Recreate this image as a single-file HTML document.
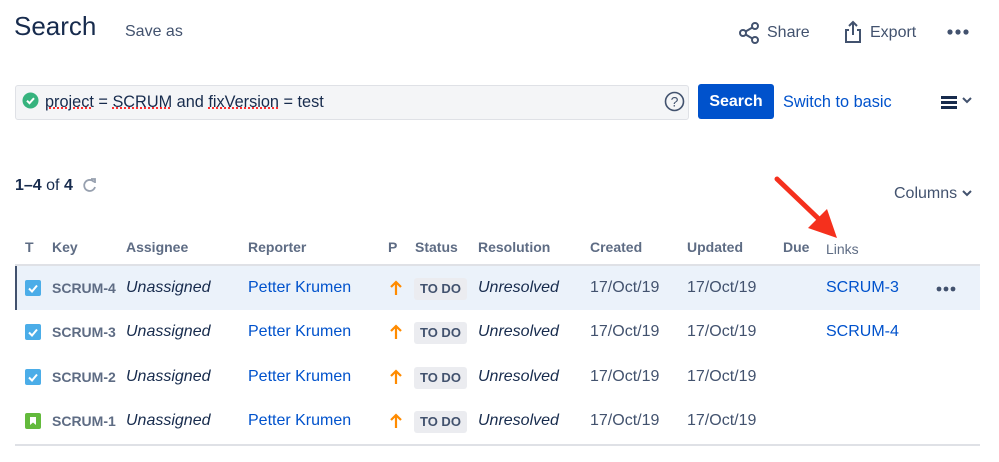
<!DOCTYPE html>
<html><head><meta charset="utf-8"><style>
*{margin:0;padding:0;box-sizing:border-box}
body{width:999px;height:462px;background:#fff;font-family:"Liberation Sans",Arial,sans-serif;color:#172b4d;position:relative;overflow:hidden}
.a{position:absolute;white-space:nowrap}
.h{font-size:14px;font-weight:bold;color:#5e6c84;top:239px}
.r{font-size:16px;line-height:20px}
.key{font-size:14px;font-weight:bold;color:#5e6c84}
.it{font-style:italic;color:#172b4d}
.lnk{color:#0052cc}
.td{background:#ebecf0;color:#42526e;font-size:13px;font-weight:bold;padding:3px 6px;border-radius:3px;line-height:16px}
</style></head><body>
<div class="a" style="left:14px;top:11px;font-size:26px;color:#172b4d">Search</div>
<div class="a" style="left:125px;top:23px;font-size:16px;color:#42526e">Save as</div>

<svg class="a" style="left:738px;top:22px" width="22" height="22" viewBox="0 0 22 22"><g fill="none" stroke="#42526e" stroke-width="2"><circle cx="5" cy="11" r="3"/><circle cx="17" cy="4" r="3"/><circle cx="17" cy="18" r="3"/><path d="M7.6 9.5L14.4 5.5M7.6 12.5L14.4 16.5"/></g></svg>
<div class="a" style="left:767px;top:24px;font-size:16px;color:#42526e">Share</div>
<svg class="a" style="left:843px;top:20px" width="20" height="24" viewBox="0 0 20 24"><g fill="none" stroke="#42526e" stroke-width="2"><path d="M6 10H3v12h14V10h-3M10 15V2M6 6l4-4 4 4"/></g></svg>
<div class="a" style="left:870px;top:24px;font-size:16px;color:#42526e">Export</div>
<svg class="a" style="left:946px;top:28px" width="24" height="8"><circle cx="4" cy="4" r="2.6" fill="#42526e"/><circle cx="12" cy="4" r="2.6" fill="#42526e"/><circle cx="20" cy="4" r="2.6" fill="#42526e"/></svg>

<div class="a" style="left:15px;top:85px;width:674px;height:35px;background:#f4f5f7;border:1px solid #dfe1e6;border-radius:3px"></div>
<svg class="a" style="left:22px;top:92px" width="17" height="17" viewBox="0 0 17 17"><circle cx="8.5" cy="8.5" r="8" fill="#36b37e"/><path d="M5 8.7l2.5 2.5 4.5-5" fill="none" stroke="#fff" stroke-width="2"/></svg>
<div class="a" style="left:45px;top:93px;font-size:16.3px;color:#172b4d"><span style="text-decoration:underline dotted red">project</span> = <span style="text-decoration:underline dotted red">SCRUM</span> and <span style="text-decoration:underline dotted red">fixVersion</span> = test</div>
<svg class="a" style="left:664px;top:91px" width="21" height="21" viewBox="0 0 21 21"><circle cx="10.5" cy="10.5" r="9" fill="none" stroke="#42526e" stroke-width="1.6"/><text x="10.5" y="15.5" text-anchor="middle" font-size="14" fill="#42526e" font-family="Liberation Sans">?</text></svg>
<div class="a" style="left:698px;top:84px;width:76px;height:35px;background:#0052cc;border-radius:3px;color:#fff;font-weight:bold;font-size:16px;text-align:center;line-height:35px">Search</div>
<div class="a" style="left:783px;top:93px;font-size:16.3px;color:#0052cc">Switch to basic</div>
<div class="a" style="left:941px;top:96px;width:16px;height:3px;background:#172b4d;box-shadow:0 5px 0 #172b4d,0 10px 0 #172b4d"></div>
<svg class="a" style="left:962px;top:97px" width="10" height="7" viewBox="0 0 10 7"><path d="M1 1l4 4 4-4" fill="none" stroke="#42526e" stroke-width="2"/></svg>

<div class="a" style="left:15px;top:177px;font-size:16px;color:#172b4d"><b>1–4</b> of <b>4</b></div>
<svg class="a" style="left:82px;top:178px" width="15" height="15" viewBox="0 0 15 15"><path d="M12 4A5.5 5.5 0 1 0 13 9" fill="none" stroke="#97a0af" stroke-width="1.8"/><path d="M9 1h4v4" fill="none" stroke="#97a0af" stroke-width="1.8"/></svg>
<div class="a" style="left:894px;top:185px;font-size:16px;color:#42526e">Columns</div>
<svg class="a" style="left:962px;top:190px" width="10" height="7" viewBox="0 0 10 7"><path d="M1 1l4 4 4-4" fill="none" stroke="#42526e" stroke-width="2"/></svg>

<svg class="a" style="left:770px;top:172px" width="70" height="70" viewBox="0 0 70 70"><path d="M7 7L52 50" stroke="#f5301d" stroke-width="5" stroke-linecap="round"/><path d="M67 66L38 56 57 37z" fill="#f5301d"/></svg>

<div class="a h" style="left:25px">T</div>
<div class="a h" style="left:52px">Key</div>
<div class="a h" style="left:126px">Assignee</div>
<div class="a h" style="left:248px">Reporter</div>
<div class="a h" style="left:388px">P</div>
<div class="a h" style="left:415px">Status</div>
<div class="a h" style="left:478px">Resolution</div>
<div class="a h" style="left:590px">Created</div>
<div class="a h" style="left:687px">Updated</div>
<div class="a h" style="left:783px">Due</div>
<div class="a" style="left:826px;top:241px;font-size:14px;color:#5e6c84">Links</div>

<div class="a" style="left:15px;top:264px;width:965px;height:2px;background:#dfe1e6"></div>
<div class="a" style="left:15px;top:266px;width:965px;height:44px;background:#ebf2fa;border-left:2px solid #42526e"></div>
<div class="a" style="left:15px;top:444px;width:965px;height:2px;background:#dfe1e6"></div>

<div class="a" style="left:0;top:278px;width:999px;height:20px">
 <svg class="a" style="left:25px;top:2px" width="16" height="16"><rect width="16" height="16" rx="2" fill="#4bade8"/><path d="M4 8.5l3 3 5-6" fill="none" stroke="#fff" stroke-width="2"/></svg>
 <div class="a key" style="left:52px;top:2px">SCRUM-4</div>
 <div class="a r it" style="left:126px">Unassigned</div>
 <div class="a r lnk" style="left:248px">Petter Krumen</div>
 <svg class="a" style="left:389px;top:2px" width="14" height="16"><path d="M7 15V2M2 7l5-5 5 5" fill="none" stroke="#ff8b00" stroke-width="2.2"/></svg>
 <div class="a td" style="left:414px;top:0">TO DO</div>
 <div class="a r it" style="left:478px">Unresolved</div>
 <div class="a r" style="left:590px;color:#42526e">17/Oct/19</div>
 <div class="a r" style="left:687px;color:#42526e">17/Oct/19</div>
 <div class="a r lnk" style="left:826px">SCRUM-3</div>
 <svg class="a" style="left:935px;top:7px" width="22" height="8"><circle cx="4" cy="4" r="2.4" fill="#42526e"/><circle cx="11" cy="4" r="2.4" fill="#42526e"/><circle cx="18" cy="4" r="2.4" fill="#42526e"/></svg>
</div>
<div class="a" style="left:0;top:322px;width:999px;height:20px">
 <svg class="a" style="left:25px;top:2px" width="16" height="16"><rect width="16" height="16" rx="2" fill="#4bade8"/><path d="M4 8.5l3 3 5-6" fill="none" stroke="#fff" stroke-width="2"/></svg>
 <div class="a key" style="left:52px;top:2px">SCRUM-3</div>
 <div class="a r it" style="left:126px">Unassigned</div>
 <div class="a r lnk" style="left:248px">Petter Krumen</div>
 <svg class="a" style="left:389px;top:2px" width="14" height="16"><path d="M7 15V2M2 7l5-5 5 5" fill="none" stroke="#ff8b00" stroke-width="2.2"/></svg>
 <div class="a td" style="left:414px;top:0">TO DO</div>
 <div class="a r it" style="left:478px">Unresolved</div>
 <div class="a r" style="left:590px;color:#42526e">17/Oct/19</div>
 <div class="a r" style="left:687px;color:#42526e">17/Oct/19</div>
 <div class="a r lnk" style="left:826px">SCRUM-4</div>
</div>
<div class="a" style="left:0;top:367px;width:999px;height:20px">
 <svg class="a" style="left:25px;top:2px" width="16" height="16"><rect width="16" height="16" rx="2" fill="#4bade8"/><path d="M4 8.5l3 3 5-6" fill="none" stroke="#fff" stroke-width="2"/></svg>
 <div class="a key" style="left:52px;top:2px">SCRUM-2</div>
 <div class="a r it" style="left:126px">Unassigned</div>
 <div class="a r lnk" style="left:248px">Petter Krumen</div>
 <svg class="a" style="left:389px;top:2px" width="14" height="16"><path d="M7 15V2M2 7l5-5 5 5" fill="none" stroke="#ff8b00" stroke-width="2.2"/></svg>
 <div class="a td" style="left:414px;top:0">TO DO</div>
 <div class="a r it" style="left:478px">Unresolved</div>
 <div class="a r" style="left:590px;color:#42526e">17/Oct/19</div>
 <div class="a r" style="left:687px;color:#42526e">17/Oct/19</div>
</div>
<div class="a" style="left:0;top:411px;width:999px;height:20px">
 <svg class="a" style="left:25px;top:2px" width="16" height="16"><rect width="16" height="16" rx="2" fill="#63ba3c"/><path d="M5 4h6v8l-3-2.5L5 12z" fill="#fff"/></svg>
 <div class="a key" style="left:52px;top:2px">SCRUM-1</div>
 <div class="a r it" style="left:126px">Unassigned</div>
 <div class="a r lnk" style="left:248px">Petter Krumen</div>
 <svg class="a" style="left:389px;top:2px" width="14" height="16"><path d="M7 15V2M2 7l5-5 5 5" fill="none" stroke="#ff8b00" stroke-width="2.2"/></svg>
 <div class="a td" style="left:414px;top:0">TO DO</div>
 <div class="a r it" style="left:478px">Unresolved</div>
 <div class="a r" style="left:590px;color:#42526e">17/Oct/19</div>
 <div class="a r" style="left:687px;color:#42526e">17/Oct/19</div>
</div>
</body></html>
